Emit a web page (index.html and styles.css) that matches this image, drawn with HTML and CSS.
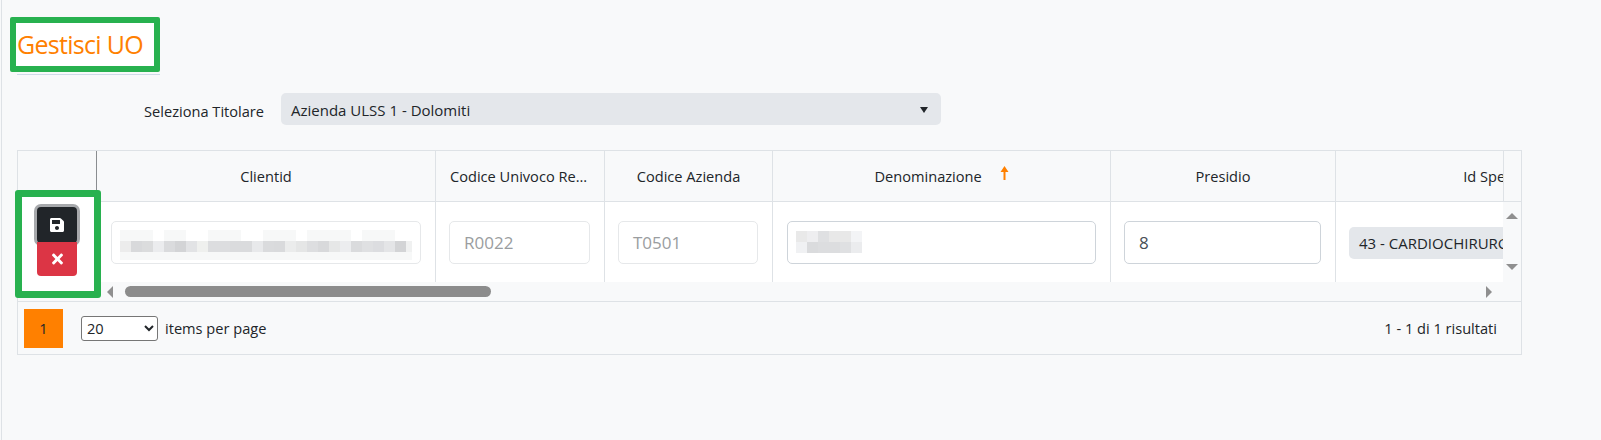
FILE: index.html
```html
<!DOCTYPE html>
<html lang="it">
<head>
    <meta charset="UTF-8">
    <meta name="viewport" content="width=device-width, initial-scale=1.0">
    <title>Gestisci UO</title>
    <link rel="stylesheet" href="styles.css">
</head>
<body>
    <div class="page">
        <h1 class="title">Gestisci UO</h1>
        <div class="title-line"></div>

        <div class="owner-row">
            <label class="owner-label">Seleziona Titolare</label>
            <div class="fake-select owner-select">
                <span>Azienda ULSS 1 - Dolomiti</span>
                <span class="caret"></span>
            </div>
        </div>

        <div class="grid">
            <div class="grid-main">
                <div class="grid-view">
                    <table class="grid-table">
                        <colgroup>
                            <col class="col-actions">
                            <col class="col-client">
                            <col class="col-codice">
                            <col class="col-azienda">
                            <col class="col-denom">
                            <col class="col-presidio">
                            <col class="col-spec">
                        </colgroup>
                        <thead>
                            <tr>
                                <th class="th-actions"></th>
                                <th>Clientid</th>
                                <th><span class="th-cut">Codice Univoco Reparto</span></th>
                                <th>Codice Azienda</th>
                                <th>
                                    Denominazione
                                    <svg class="sort-arrow" viewBox="0 0 9 14" width="9" height="14">
                                        <path d="M4.5 0 L8.5 6 H5.5 V14 H3.5 V6 H0.5 Z" fill="#ff8000"/>
                                    </svg>
                                </th>
                                <th>Presidio</th>
                                <th>Id Specialità</th>
                            </tr>
                        </thead>
                        <tbody>
                            <tr>
                                <td></td>
                                <td>
                                    <div class="field field-off">
                                        <svg class="blur" width="292" height="30" viewBox="0 0 292 30">
                                            <g fill="#f7f8f8">
                                                <rect x="0" y="0" width="33" height="11"/>
                                                <rect x="44" y="0" width="22" height="11"/>
                                                <rect x="88" y="0" width="33" height="11"/>
                                                <rect x="143" y="0" width="33" height="11"/>
                                                <rect x="187" y="0" width="44" height="11"/>
                                                <rect x="242" y="0" width="33" height="11"/>
                                                <rect x="0" y="22" width="292" height="8"/>
                                            </g>
                                            <rect x="0" y="11" width="11" height="11" fill="#ececec"/>
                                            <rect x="11" y="11" width="11" height="11" fill="#d8d9db"/>
                                            <rect x="22" y="11" width="11" height="11" fill="#dbdcdd"/>
                                            <rect x="33" y="11" width="11" height="11" fill="#ebecee"/>
                                            <rect x="44" y="11" width="11" height="11" fill="#dadbdd"/>
                                            <rect x="55" y="11" width="11" height="11" fill="#d3d4d6"/>
                                            <rect x="66" y="11" width="11" height="11" fill="#e2e3e5"/>
                                            <rect x="77" y="11" width="11" height="11" fill="#eff0ee"/>
                                            <rect x="88" y="11" width="11" height="11" fill="#dcdddf"/>
                                            <rect x="99" y="11" width="11" height="11" fill="#dcdddf"/>
                                            <rect x="110" y="11" width="11" height="11" fill="#dadbdd"/>
                                            <rect x="121" y="11" width="11" height="11" fill="#dadbdd"/>
                                            <rect x="132" y="11" width="11" height="11" fill="#e8e9eb"/>
                                            <rect x="143" y="11" width="11" height="11" fill="#dadbdd"/>
                                            <rect x="154" y="11" width="11" height="11" fill="#d9dadc"/>
                                            <rect x="165" y="11" width="11" height="11" fill="#ebecec"/>
                                            <rect x="176" y="11" width="11" height="11" fill="#e5e6e6"/>
                                            <rect x="187" y="11" width="11" height="11" fill="#dddee0"/>
                                            <rect x="198" y="11" width="11" height="11" fill="#d8d9db"/>
                                            <rect x="209" y="11" width="11" height="11" fill="#e6e7e7"/>
                                            <rect x="220" y="11" width="11" height="11" fill="#ecedef"/>
                                            <rect x="231" y="11" width="11" height="11" fill="#dadbdd"/>
                                            <rect x="242" y="11" width="11" height="11" fill="#dfe0e2"/>
                                            <rect x="253" y="11" width="11" height="11" fill="#dcdde0"/>
                                            <rect x="264" y="11" width="11" height="11" fill="#e4e5e7"/>
                                            <rect x="275" y="11" width="11" height="11" fill="#d3d4d6"/>
                                            <rect x="286" y="11" width="6" height="11" fill="#f0f1f1"/>
                                        </svg>
                                    </div>
                                </td>
                                <td class="td-tight"><div class="field field-off">R0022</div></td>
                                <td class="td-tight"><div class="field field-off">T0501</div></td>
                                <td>
                                    <div class="field">
                                        <svg class="blur-short" width="66" height="22" viewBox="0 0 66 22">
                                            <rect x="0" y="0" width="11" height="11" fill="#e9e9e9"/>
                                            <rect x="11" y="0" width="11" height="11" fill="#eeeef0"/>
                                            <rect x="22" y="0" width="11" height="11" fill="#dfe0e2"/>
                                            <rect x="33" y="0" width="22" height="11" fill="#e8e8e8"/>
                                            <rect x="55" y="0" width="11" height="11" fill="#f3f4f6"/>
                                            <rect x="0" y="11" width="11" height="11" fill="#f0f1f3"/>
                                            <rect x="11" y="11" width="11" height="11" fill="#dadbdd"/>
                                            <rect x="22" y="11" width="22" height="11" fill="#dcdddf"/>
                                            <rect x="44" y="11" width="11" height="11" fill="#dfe0e2"/>
                                            <rect x="55" y="11" width="11" height="11" fill="#ebecee"/>
                                        </svg>
                                    </div>
                                </td>
                                <td class="td-tight"><div class="field">8</div></td>
                                <td class="td-tight">
                                    <div class="fake-select spec-select">43 - CARDIOCHIRURGIA</div>
                                </td>
                            </tr>
                        </tbody>
                    </table>
                </div>
                <div class="vscroll">
                    <div class="vscroll-head"></div>
                    <div class="vscroll-track">
                        <span class="arrow arrow-up"></span>
                        <span class="arrow arrow-down"></span>
                    </div>
                </div>
            </div>

            <div class="hscroll">
                <span class="arrow arrow-left"></span>
                <div class="hscroll-track"><div class="hscroll-thumb"></div></div>
                <span class="arrow arrow-right"></span>
            </div>

            <div class="pager">
                <span class="page-num">1</span>
                <select class="page-size">
                    <option>20</option>
                </select>
                <span class="page-text">items per page</span>
                <span class="page-info">1 - 1 di 1 risultati</span>
            </div>

            <!-- riquadro verde sopra la colonna azioni -->
            <div class="actions-mark">
                <button class="btn btn-save">
                    <svg viewBox="0 0 448 512" width="14" height="16">
                        <path fill="#fff" d="M433.941 129.941l-83.882-83.882A48 48 0 0 0 316.118 32H48C21.49 32 0 53.49 0 80v352c0 26.51 21.49 48 48 48h352c26.51 0 48-21.49 48-48V163.882a48 48 0 0 0-14.059-33.941zM224 416c-35.346 0-64-28.654-64-64 0-35.346 28.654-64 64-64s64 28.654 64 64c0 35.346-28.654 64-64 64zm96-304.52V212c0 6.627-5.373 12-12 12H76c-6.627 0-12-5.373-12-12V108c0-6.627 5.373-12 12-12h228.52c3.183 0 6.235 1.264 8.485 3.515l3.48 3.48A11.996 11.996 0 0 1 320 111.48z"/>
                    </svg>
                </button>
                <button class="btn btn-delete">
                    <svg viewBox="0 0 352 512" width="11" height="16">
                        <path fill="#fff" d="M242.72 256l100.07-100.07c12.28-12.28 12.28-32.19 0-44.48l-22.24-22.24c-12.28-12.28-32.19-12.28-44.48 0L176 189.28 75.93 89.21c-12.28-12.28-32.19-12.28-44.48 0L9.21 111.45c-12.28 12.28-12.28 32.19 0 44.48L109.28 256 9.21 356.07c-12.28 12.28-12.28 32.19 0 44.48l22.24 22.24c12.28 12.28 32.2 12.28 44.48 0L176 322.72l100.07 100.07c12.28 12.28 32.2 12.28 44.48 0l22.24-22.24c12.28-12.28 12.28-32.19 0-44.48L242.72 256z"/>
                    </svg>
                </button>
            </div>
        </div>
    </div>
</body>
</html>
```

FILE: styles.css
```css
* {
    box-sizing: border-box;
}
html, body {
    height: 100%;
}
body {
    margin: 0;
    background-color: #f8f9fa;
    color: #212529;
    font-family: "Open Sans", "Noto Sans", sans-serif;
    font-size: 14.6px;
    overflow: hidden;
}
.page {
    height: 100%;
    margin-left: 1px;
    border-left: 1px solid #dee2e6;
    padding: 17px 0 0 8px;
}

/* titolo */
.title {
    width: 150px;
    height: 55px;
    margin: 0;
    padding: 4px 0 0 1px;
    border: 6px solid #28b14f;
    border-radius: 2px;
    background-color: #fff;
    color: #ff8000;
    font-size: 25px;
    font-weight: 400;
    letter-spacing: -0.7px;
    line-height: 34px;
    white-space: nowrap;
}
.title-line {
    width: 143px;
    height: 1px;
    margin: 2px 0 0 7px;
    background-color: #cfdbe8;
}

/* selezione titolare */
.owner-row {
    display: flex;
    align-items: center;
    margin: 18px 0 0 0;
}
.owner-label {
    width: 254px;
    padding-top: 3px;
    text-align: right;
}
.fake-select {
    display: flex;
    align-items: center;
    background-color: #e4e7eb;
    border-radius: 5px;
    font-size: 15px;
    height: 32px;
    white-space: nowrap;
}
.owner-select {
    justify-content: space-between;
    width: 660px;
    margin-left: 17px;
    padding: 1px 13px 0 10px;
}
.caret {
    width: 0;
    height: 0;
    border-left: 4.5px solid transparent;
    border-right: 4.5px solid transparent;
    border-top: 6px solid #212529;
}

/* griglia */
.grid {
    position: relative;
    width: 1505px;
    margin: 25px 0 0 7px;
    border: 1px solid #dee2e6;
}
.grid-main {
    display: flex;
}
.grid-view {
    width: 1485px;
    overflow: hidden;
}
.grid-table {
    table-layout: fixed;
    width: 1655px;
    border-collapse: separate;
    border-spacing: 0;
}
.col-actions { width: 79px; }
.col-client { width: 339px; }
.col-codice { width: 169px; }
.col-azienda { width: 168px; }
.col-denom { width: 338px; }
.col-presidio { width: 225px; }
.col-spec { width: 337px; }
.grid-table th {
    height: 51px;
    padding: 0 14px;
    border-right: 1px solid #dee2e6;
    border-bottom: 1px solid #dee2e6;
    font-weight: 400;
    text-align: center;
    white-space: nowrap;
    overflow: hidden;
}
.grid-table th.th-actions {
    border-right-color: #8a8d90;
}
.th-cut {
    display: block;
    overflow: hidden;
    text-overflow: ellipsis;
}
.sort-arrow {
    margin-left: 14px;
    vertical-align: 2px;
}
.grid-table td {
    height: 80px;
    padding: 19px 14px 18px 14px;
    border-right: 1px solid #dee2e6;
    background-color: #fff;
}
.grid-table td.td-tight {
    padding-left: 13px;
}
.grid-table td:last-child {
    border-right: 0;
    overflow: hidden;
}
.field {
    display: flex;
    align-items: center;
    height: 43px;
    padding: 0 14px;
    border: 1px solid #ced4da;
    border-radius: 5px;
    background-color: #fff;
    color: #495057;
    font-size: 17px;
}
.field-off {
    border-color: #e6e8ea;
    color: #9a9da0;
}
.field .blur {
    flex: none;
    margin-left: -6px;
    margin-top: 4px;
}
.field .blur-short {
    flex: none;
    margin-left: -6px;
    margin-top: -1px;
}
.spec-select {
    width: 310px;
    padding-left: 10px;
}
.vscroll {
    width: 18px;
}
.vscroll-head {
    height: 51px;
    border-left: 1px solid #dee2e6;
    border-bottom: 1px solid #dee2e6;
}
.vscroll-track {
    display: flex;
    flex-direction: column;
    align-items: center;
    justify-content: space-between;
    height: 80px;
    padding: 11px 0 12px 0;
}
.arrow {
    display: block;
    width: 0;
    height: 0;
    border: 6px solid transparent;
}
.arrow-up {
    border-top: 0;
    border-bottom: 6px solid #8f8f8f;
}
.arrow-down {
    border-bottom: 0;
    border-top: 6px solid #8f8f8f;
}
.arrow-left {
    border-left: 0;
    border-right: 6px solid #8f8f8f;
}
.arrow-right {
    border-right: 0;
    border-left: 6px solid #8f8f8f;
}
.hscroll {
    display: flex;
    align-items: center;
    height: 20px;
    padding: 0 29px 0 89px;
    border-bottom: 1px solid #dee2e6;
}
.hscroll-track {
    flex: 1;
    padding: 0 0 0 12px;
}
.hscroll-thumb {
    width: 366px;
    height: 11px;
    border-radius: 6px;
    background-color: #8c8c8c;
}

/* paginazione */
.pager {
    display: flex;
    align-items: center;
    height: 52px;
    padding: 0 24px 0 6px;
}
.page-num {
    width: 39px;
    height: 39px;
    background-color: #ff8000;
    color: #212529;
    line-height: 39px;
    text-align: center;
}
.page-size {
    width: 77px;
    height: 25px;
    margin-left: 18px;
    padding: 0 0 0 1px;
    border: 1px solid #767676;
    border-radius: 3px;
    background-color: #fff;
    color: #212529;
    font-family: inherit;
    font-size: 14.6px;
}
.page-text {
    margin-left: 7px;
}
.page-info {
    margin-left: auto;
}

/* azioni sopra la griglia */
.actions-mark {
    position: absolute;
    left: -3px;
    top: 39px;
    display: flex;
    flex-direction: column;
    align-items: center;
    width: 86px;
    height: 108px;
    padding-top: 10px;
    border: 7px solid #28b14f;
    border-radius: 3px;
    background-color: #fff;
}
.btn {
    display: flex;
    align-items: center;
    justify-content: center;
    width: 40px;
    height: 34px;
    margin-right: 2px;
    padding: 0;
    border: 0;
    border-radius: 4px;
}
.btn-save {
    height: 36px;
    margin-bottom: -1px;
    background-color: #212529;
    box-shadow: 0 0 0 3px #a7a9ac;
}
.btn-delete {
    position: relative;
    border-radius: 0 0 4px 4px;
    background-color: #dc3545;
}
```
